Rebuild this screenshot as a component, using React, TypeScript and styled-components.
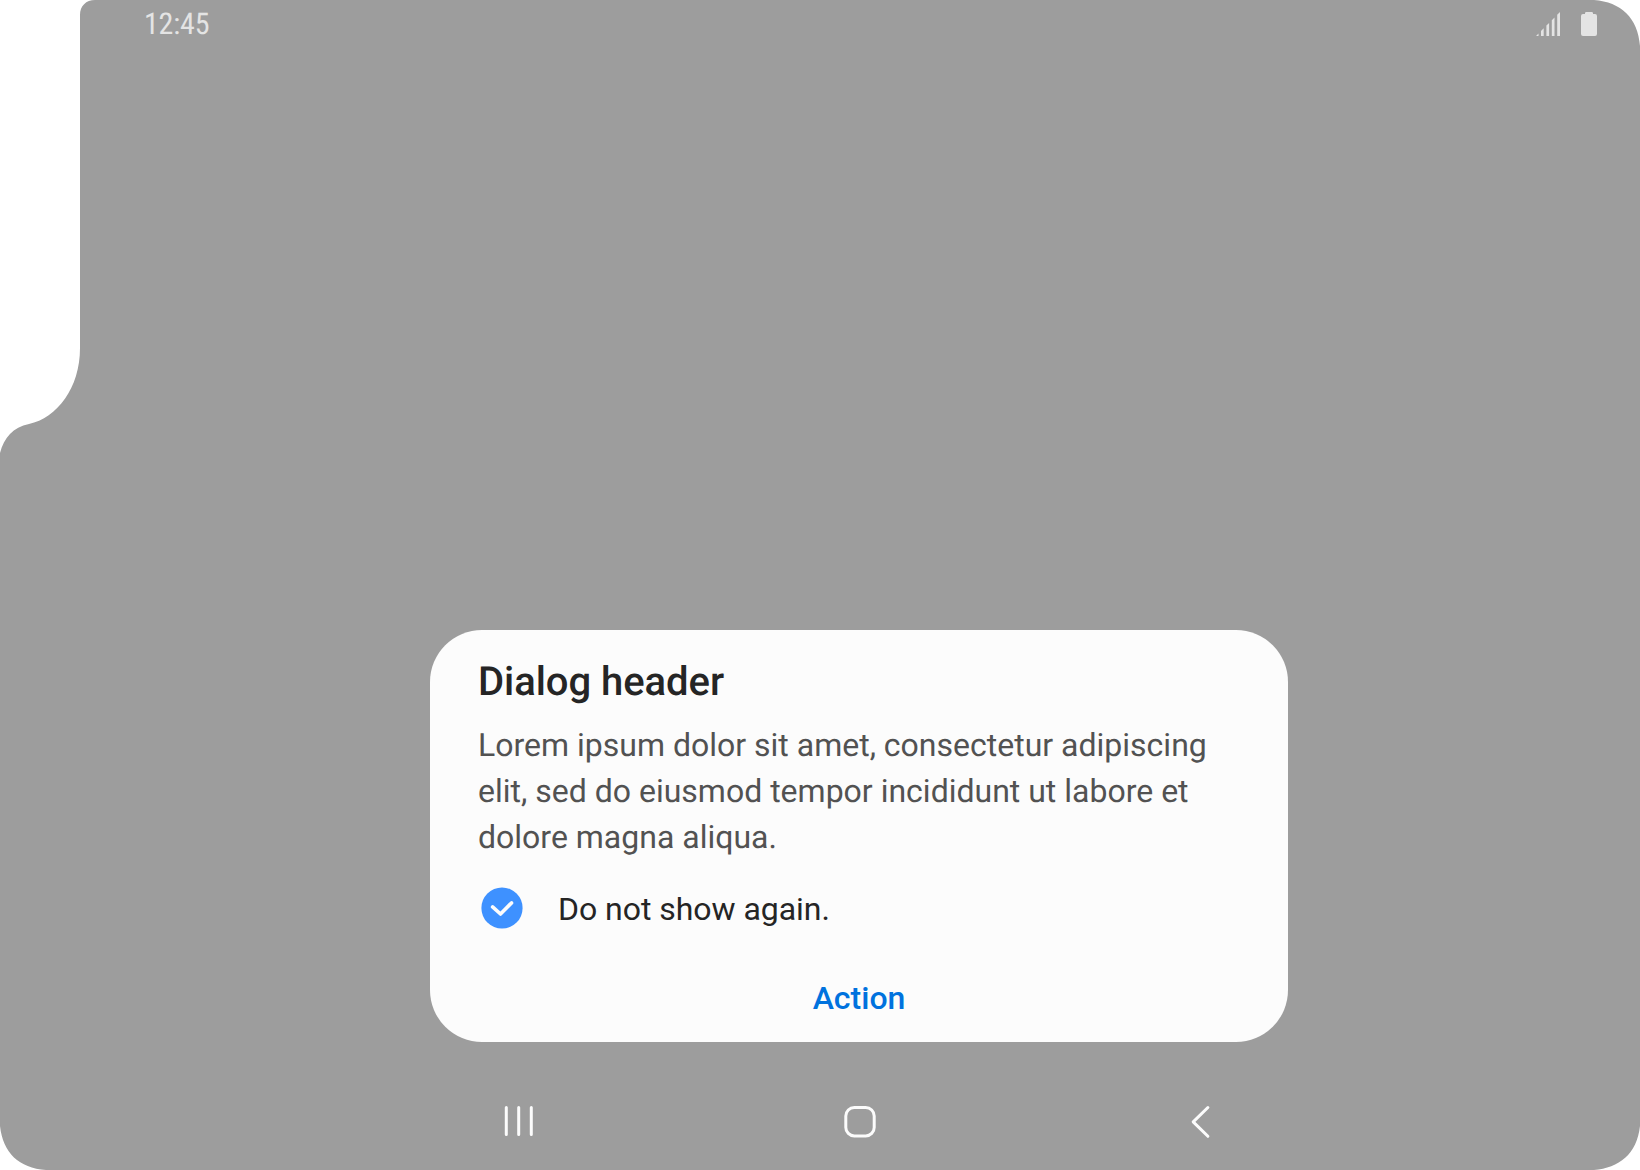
import { useState } from 'react';
import styled, { createGlobalStyle } from 'styled-components';

const GlobalStyle = createGlobalStyle`
  * { box-sizing: border-box; }
  body {
    margin: 0;
    background: #ffffff;
    font-family: Roboto, "Liberation Sans", sans-serif;
    text-rendering: geometricPrecision;
  }
`;

const Screen = styled.main`
  width: 1640px;
  height: 1170px;
  padding-left: 80px;
  display: flex;
  flex-direction: column;
  background: #9d9d9d;
  clip-path: path('M80 15 C80 6 86 0 95 0 H1594 C1621 2 1638 18 1640 46 V1126 C1637 1154 1619 1168 1594 1170 H46 C19 1168 3 1153 0 1126 V453 C4 438 13 427 29 424 C57 418 80 388 80 348 Z');
`;

const StatusBar = styled.header`
  height: 48px;
  padding: 0 43px 0 64px;
  display: flex;
  align-items: center;
  justify-content: space-between;
`;

const Clock = styled.span`
  padding-top: 2px;
  font-family: "Roboto Condensed", Roboto, sans-serif;
  font-size: 30px;
  font-weight: 400;
  font-stretch: 75%;
  line-height: 46px;
  letter-spacing: -0.2px;
  color: #e4e4e4;
`;

const StatusIcons = styled.div`
  display: flex;
  gap: 21px;
`;

const DialogArea = styled.section`
  flex: 1;
  padding: 0 2px 33px 0;
  display: flex;
  align-items: flex-end;
  justify-content: center;
`;

const Dialog = styled.div`
  width: 858px;
  height: 412px;
  padding: 28px 48px 20px;
  border-radius: 52px;
  background: #fcfcfc;
  display: flex;
  flex-direction: column;
`;

const Title = styled.h1`
  margin: 0;
  font-size: 40px;
  font-weight: 500;
  line-height: 48px;
  letter-spacing: -0.05px;
  color: #252525;
`;

const Message = styled.p`
  margin: 16px 0 0;
  font-size: 32px;
  line-height: 46px;
  color: #525252;
`;

const CheckRow = styled.button`
  margin-top: 24px;
  padding: 0;
  height: 48px;
  border: 0;
  background: none;
  display: flex;
  align-items: center;
  gap: 32px;
  font: 400 32px/48px Roboto, sans-serif;
  color: #252525;
`;

const CheckLabel = styled.span`
  padding-top: 2px;
  letter-spacing: -0.04px;
`;

const ActionButton = styled.button`
  margin-top: auto;
  padding: 0;
  border: 0;
  background: none;
  font: 500 32px/48px Roboto, sans-serif;
  color: #0072de;
`;

const NavBar = styled.nav`
  height: 95px;
  display: flex;
  justify-content: center;
  gap: 293px;
`;

const NavButton = styled.button`
  width: 48px;
  height: 92px;
  padding: 0;
  border: 0;
  background: none;
  display: flex;
  align-items: center;
  justify-content: center;
`;

const NavGlyph = styled.svg`
  fill: none;
  stroke: #fcfcfc;
  stroke-width: 3;
  flex: none;
`;

function SignalIcon() {
  return (
    <svg width="24" height="24" viewBox="0 0 24 24" fill="#e4e4e4">
      <path d="M0 24 2.5 21.5V24ZM5 24V19L7.7 16.3V24ZM10.4 24V13.6L13.1 10.9V24ZM15.8 24V8.2L18.5 5.5V24ZM21.2 24V2.8L24 0V24Z" />
    </svg>
  );
}

function BatteryIcon() {
  return (
    <svg width="16" height="24" viewBox="0 0 16 24" fill="#e4e4e4">
      <path d="M4 2V1.3Q4 0 5.3 0H10.7Q12 0 12 1.3V2H14Q16 2 16 4V22Q16 24 14 24H2Q0 24 0 22V4Q0 2 2 2Z" />
    </svg>
  );
}

function CheckIcon({ checked }: { checked: boolean }) {
  return (
    <svg width="48" height="48" viewBox="0 0 48 48" fill="none">
      <circle cx="24" cy="24" r={checked ? 20.6 : 19.2} fill={checked ? '#3e91ff' : 'none'} stroke={checked ? 'none' : '#9d9d9d'} strokeWidth="3" />
      {checked && <path d="M14.6 22.9 22.5 30 33.5 18.9" stroke="#fcfcfc" strokeWidth="3.6" strokeLinecap="round" strokeLinejoin="round" />}
    </svg>
  );
}

export default function App() {
  const [checked, setChecked] = useState(true);

  return (
    <>
      <GlobalStyle />
      <Screen>
        <StatusBar>
          <Clock>12:45</Clock>
          <StatusIcons>
            <SignalIcon />
            <BatteryIcon />
          </StatusIcons>
        </StatusBar>
        <DialogArea>
          <Dialog role="dialog" aria-labelledby="dialog-title">
            <Title id="dialog-title">Dialog header</Title>
            <Message>
              Lorem ipsum dolor sit amet, consectetur adipiscing elit, sed do eiusmod tempor incididunt ut labore et dolore magna aliqua.
            </Message>
            <CheckRow role="checkbox" aria-checked={checked} onClick={() => setChecked(!checked)}>
              <CheckIcon checked={checked} />
              <CheckLabel>Do not show again.</CheckLabel>
            </CheckRow>
            <ActionButton>Action</ActionButton>
          </Dialog>
        </DialogArea>
        <NavBar>
          <NavButton aria-label="Recents">
            <NavGlyph width="48" height="48" viewBox="0 0 48 48" strokeLinecap="round">
              <path d="M11.3 10.5V37.5M23.7 10.5V37.5M36.3 10.5V37.5" />
            </NavGlyph>
          </NavButton>
          <NavButton aria-label="Home">
            <NavGlyph width="48" height="48" viewBox="0 0 48 48">
              <rect x="9.8" y="10.5" width="28.4" height="28.4" rx="8.5" />
            </NavGlyph>
          </NavButton>
          <NavButton aria-label="Back">
            <NavGlyph width="48" height="48" viewBox="0 0 48 48" strokeLinecap="round" strokeLinejoin="round">
              <path d="M30.9 10.5 16.2 24.9 30.9 39.3" />
            </NavGlyph>
          </NavButton>
        </NavBar>
      </Screen>
    </>
  );
}
